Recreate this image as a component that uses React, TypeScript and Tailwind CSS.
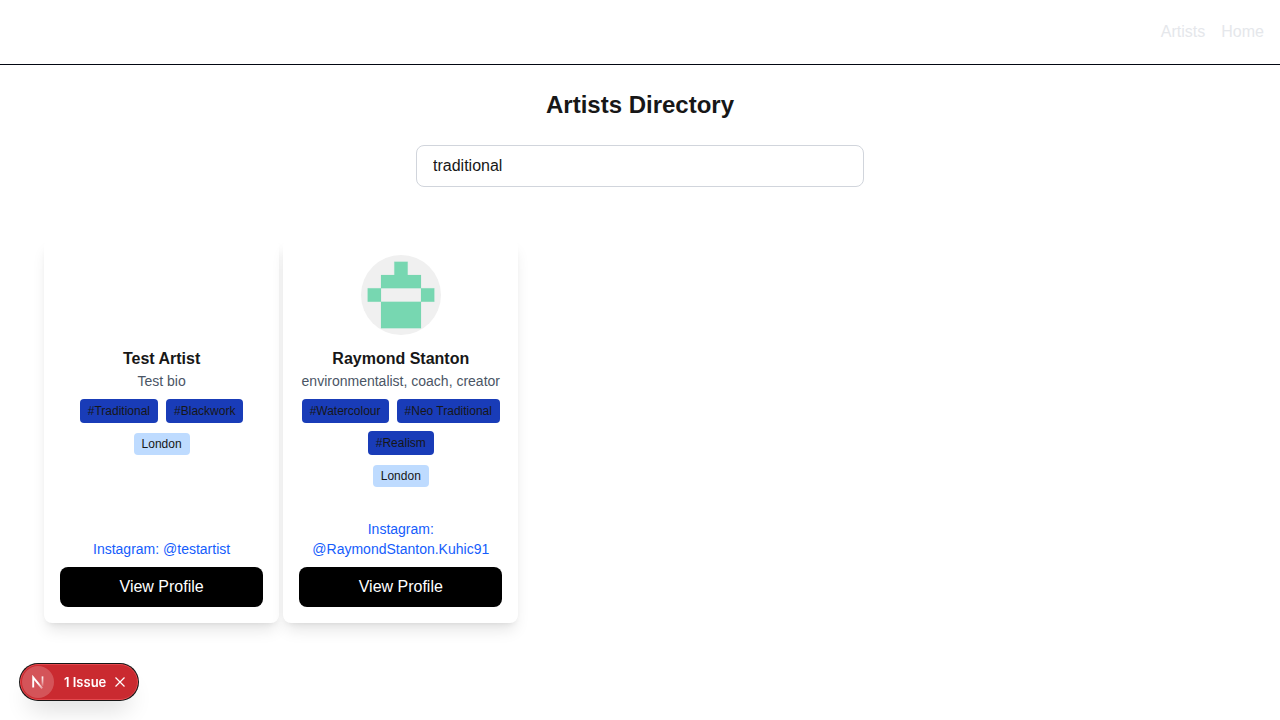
import { useState } from "react";

type Artist = {
  name: string;
  bio: string;
  styles: string[];
  location: string;
  instagram: string;
  hasAvatar: boolean;
};

const artists: Artist[] = [
  {
    name: "Test Artist",
    bio: "Test bio",
    styles: ["Traditional", "Blackwork"],
    location: "London",
    instagram: "testartist",
    hasAvatar: false,
  },
  {
    name: "Raymond Stanton",
    bio: "environmentalist, coach, creator",
    styles: ["Watercolour", "Neo Traditional", "Realism"],
    location: "London",
    instagram: "RaymondStanton.Kuhic91",
    hasAvatar: true,
  },
];

function Avatar({ name }: { name: string }) {
  return (
    <svg viewBox="0 0 80 80" className="size-20 rounded-full bg-[#f0f0f0]" role="img" aria-label={name}>
      <g fill="#77d7b1" stroke="#77d7b1" strokeOpacity="0.4" strokeWidth="0.3">
        <path d="M33.33 6.67h13.34V20H60v13.33H20V20h13.33z" />
        <path d="M6.67 33.33H20v13.34H6.67z" />
        <path d="M60 33.33h13.33v13.34H60z" />
        <path d="M20 46.67h40v26.66H20z" />
      </g>
    </svg>
  );
}

function ArtistCard({ artist }: { artist: Artist }) {
  return (
    <article className="flex h-96 flex-col items-center rounded-lg bg-white p-4 text-center shadow-lg">
      <div className="mb-3 size-20 shrink-0">{artist.hasAvatar && <Avatar name={artist.name} />}</div>
      <h2 className="text-base leading-6 font-semibold">{artist.name}</h2>
      <p className="text-sm text-gray-600">{artist.bio}</p>
      <ul className="mt-2 flex flex-wrap justify-center gap-2">
        {artist.styles.map((style) => (
          <li key={style} className="rounded bg-[#193cb8] px-2 py-1 text-xs">
            {`#${style}`}
          </li>
        ))}
      </ul>
      <div className="mt-2">
        <span className="rounded bg-[#bedbff] px-2 py-1 text-xs">{artist.location}</span>
      </div>
      <a href="#instagram" className="mt-auto text-sm text-[#155dfc]">
        {`Instagram: @${artist.instagram}`}
      </a>
      <button type="button" className="mt-2 w-full rounded-lg bg-black px-4 py-2 font-medium text-white">
        View Profile
      </button>
    </article>
  );
}

function IssueBadge() {
  return (
    <div className="fixed bottom-5 left-5 flex h-9 items-center rounded-full border border-[#e5484d] bg-[#ca2a30] pr-[11px] pl-px text-white shadow-[0_0_0_1px_#171717,0_16px_24px_-8px_rgba(0,0,0,0.16)]">
      <button
        type="button"
        aria-label="Open developer tools"
        className="flex size-8 items-center justify-center rounded-full bg-white/20"
      >
        <svg width="14" height="14" viewBox="0 0 14 14" fill="none">
          <defs>
            <linearGradient id="stem" x1="0" y1="1" x2="0" y2="12" gradientUnits="userSpaceOnUse">
              <stop stopColor="#fff" />
              <stop offset="0.6" stopColor="#fff" stopOpacity="0.5" />
              <stop offset="1" stopColor="#fff" stopOpacity="0" />
            </linearGradient>
            <linearGradient id="diagonal" x1="7" y1="8" x2="12" y2="14" gradientUnits="userSpaceOnUse">
              <stop stopColor="#fff" />
              <stop offset="1" stopColor="#fff" stopOpacity="0.3" />
            </linearGradient>
          </defs>
          <path d="M2.2 12.5V2.4l9 11" stroke="url(#diagonal)" strokeWidth="1.9" />
          <path d="M11.5 1.4v9.6" stroke="url(#stem)" strokeWidth="1.7" />
        </svg>
      </button>
      <button type="button" className="pl-2.5 font-['Inter',sans-serif] text-[13px] leading-none font-semibold">
        1 Issue
      </button>
      <button type="button" aria-label="Dismiss" className="ml-2">
        <svg width="12" height="12" viewBox="0 0 12 12" fill="none" stroke="currentColor" strokeWidth="1.2">
          <path d="M1.5 1.5l9 9M10.5 1.5l-9 9" />
        </svg>
      </button>
    </div>
  );
}

export default function App() {
  const [query, setQuery] = useState("traditional");
  return (
    <div className="min-h-screen bg-white font-['Liberation_Sans',Arial,sans-serif] text-[#171717]">
      <header className="border-b border-[#030712]">
        <nav className="flex h-16 items-center justify-end gap-4 px-4 font-medium text-gray-200">
          <a href="#artists">Artists</a>
          <a href="#home">Home</a>
        </nav>
      </header>
      <main className="px-11 pt-6">
        <h1 className="text-center text-2xl font-bold">Artists Directory</h1>
        <input
          type="text"
          aria-label="Search artists"
          value={query}
          onChange={(event) => setQuery(event.target.value)}
          className="mx-auto mt-6 block w-full max-w-md rounded-lg border border-gray-300 px-4 py-2 outline-none"
        />
        <section className="mt-13 grid grid-cols-[repeat(auto-fill,minmax(220px,1fr))] gap-1">
          {artists.map((artist) => (
            <ArtistCard key={artist.name} artist={artist} />
          ))}
        </section>
      </main>
      <IssueBadge />
    </div>
  );
}
